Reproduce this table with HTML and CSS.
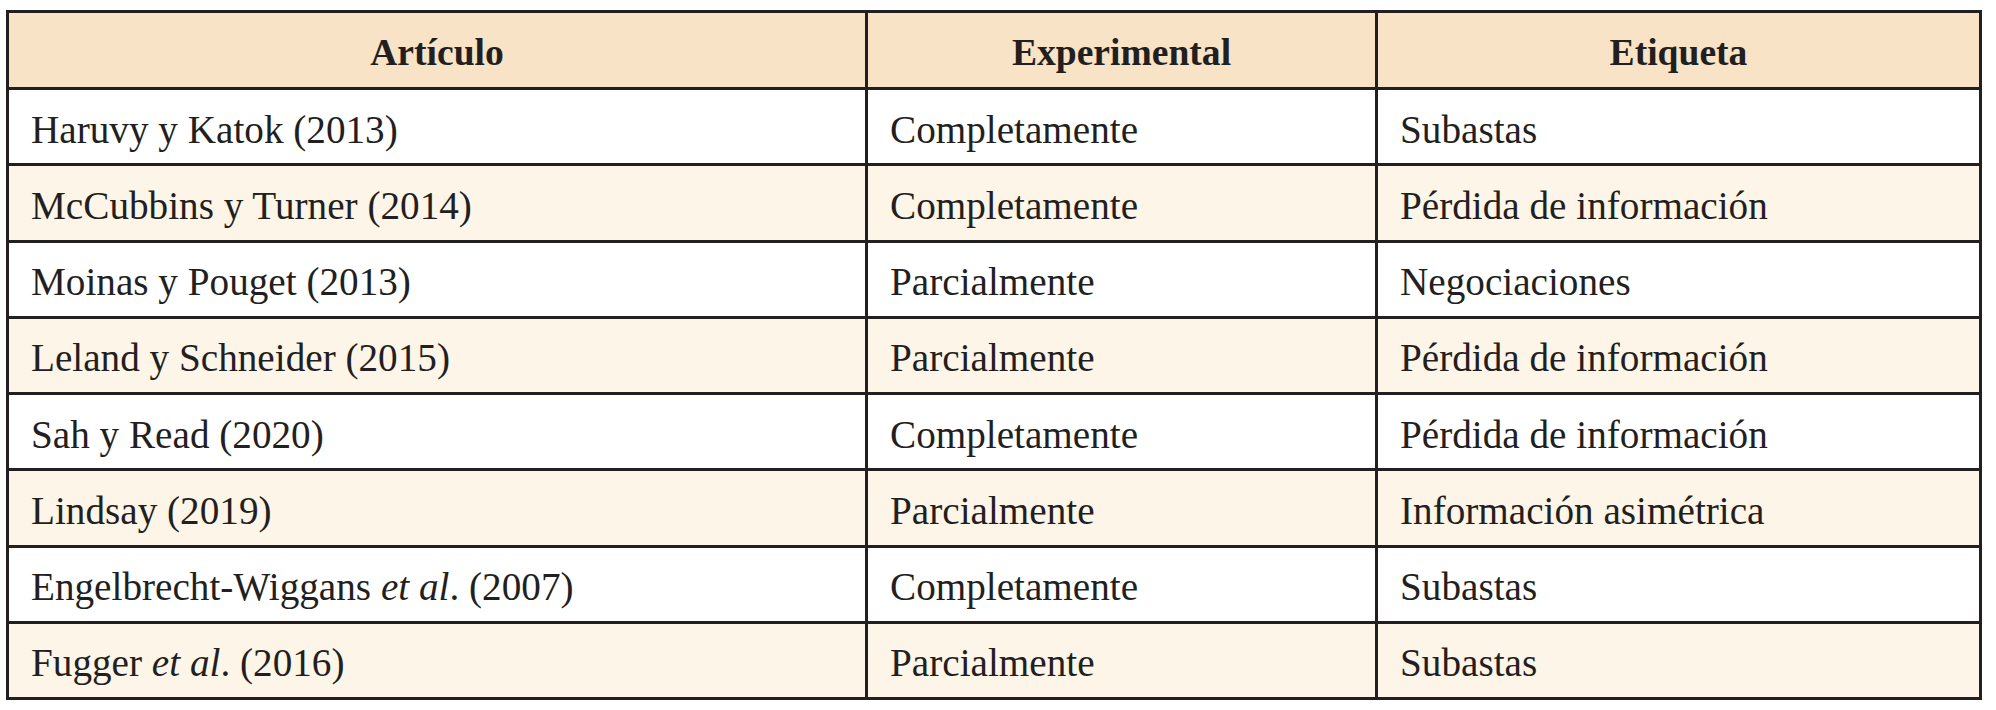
FILE: index.html
```html
<!DOCTYPE html>
<html lang="es">
<head>
<meta charset="utf-8">
<title>Tabla</title>
<link rel="stylesheet" href="styles.css">
</head>
<body>
<table class="data">
  <thead>
    <tr>
      <th class="c1">Artículo</th>
      <th class="c2">Experimental</th>
      <th class="c3">Etiqueta</th>
    </tr>
  </thead>
  <tbody>
    <tr><td>Haruvy y Katok (2013)</td><td>Completamente</td><td>Subastas</td></tr>
    <tr class="alt"><td>McCubbins y Turner (2014)</td><td>Completamente</td><td>Pérdida de información</td></tr>
    <tr><td>Moinas y Pouget (2013)</td><td>Parcialmente</td><td>Negociaciones</td></tr>
    <tr class="alt"><td>Leland y Schneider (2015)</td><td>Parcialmente</td><td>Pérdida de información</td></tr>
    <tr><td>Sah y Read (2020)</td><td>Completamente</td><td>Pérdida de información</td></tr>
    <tr class="alt"><td>Lindsay (2019)</td><td>Parcialmente</td><td>Información asimétrica</td></tr>
    <tr><td>Engelbrecht-Wiggans <em>et al</em>. (2007)</td><td>Completamente</td><td>Subastas</td></tr>
    <tr class="alt"><td>Fugger <em>et al</em>. (2016)</td><td>Parcialmente</td><td>Subastas</td></tr>
  </tbody>
</table>
</body>
</html>
```
FILE: styles.css
```css
html, body {
  margin: 0;
  padding: 0;
  background: #ffffff;
}

body {
  padding: 10px 0 0 6px;
  font-family: "Liberation Serif", "Times New Roman", serif;
  color: #231f20;
}

.data {
  width: 1976px;
  table-layout: fixed;
  border-collapse: separate;
  border-spacing: 0;
  border-top: 3px solid #231f20;
  border-left: 3px solid #231f20;
}

.data th,
.data td {
  box-sizing: border-box;
  border-right: 3px solid #231f20;
  border-bottom: 3px solid #231f20;
  padding: 5px 0 0 22px;
  vertical-align: middle;
  white-space: nowrap;
}

.data th {
  height: 77px;
  background: #f9e3c6;
  font-weight: bold;
  font-size: 37.6px;
  text-align: center;
  padding-left: 0;
}

.data .c1 { width: 859px; }
.data .c2 { width: 510px; }
.data .c3 { width: 604px; }

.data td {
  height: 76.25px;
  font-size: 39.2px;
  background: #ffffff;
}

.data tr.alt td {
  background: #fdf5e8;
}

.data em {
  font-style: italic;
}
```
